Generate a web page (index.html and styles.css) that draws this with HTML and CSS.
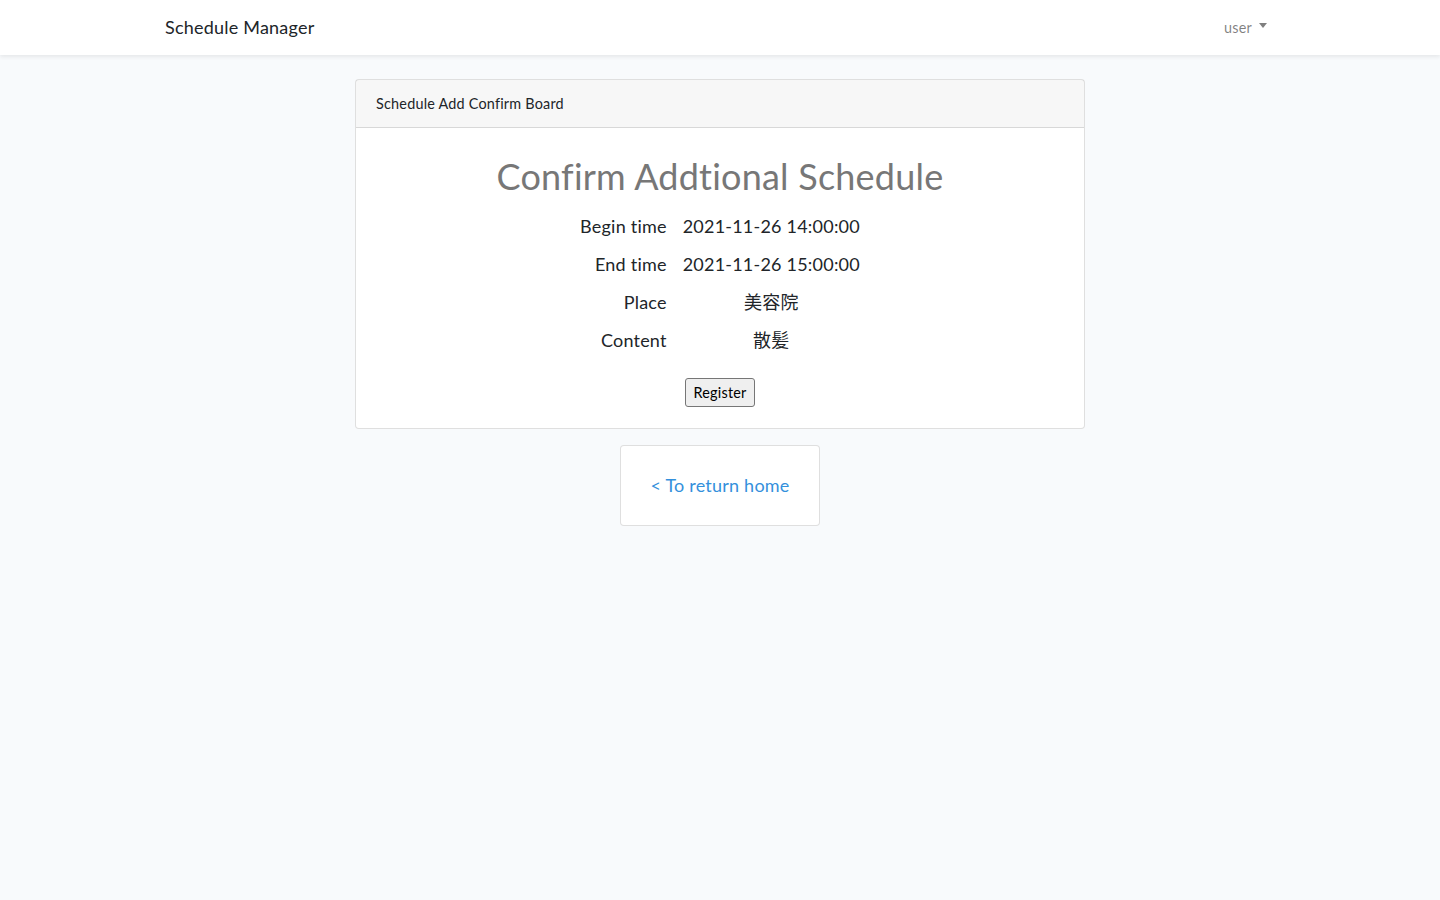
FILE: index.html
```html
<!DOCTYPE html>
<html lang="ja">
<head>
<meta charset="utf-8">
<title>Schedule Manager</title>
<link rel="stylesheet" href="styles.css">
</head>
<body>
<nav class="navbar">
  <div class="container nav-inner">
    <a class="brand" href="#">Schedule Manager</a>
    <a class="nav-user" href="#">user <span class="caret"></span></a>
  </div>
</nav>
<main class="main">
  <div class="container center-col">
    <div class="card confirm-card">
      <div class="card-header">Schedule Add Confirm Board</div>
      <div class="card-body">
        <h1 class="title">Confirm Addtional Schedule</h1>
        <table class="detail">
          <tr><th>Begin time</th><td>2021-11-26 14:00:00</td></tr>
          <tr><th>End time</th><td>2021-11-26 15:00:00</td></tr>
          <tr><th>Place</th><td>美容院</td></tr>
          <tr><th>Content</th><td>散髪</td></tr>
        </table>
        <div class="actions"><button class="btn-register" type="button">Register</button></div>
      </div>
    </div>
    <div class="card home-card">
      <a class="home-link" href="#">&lt; To return home</a>
    </div>
  </div>
</main>
</body>
</html>
```
FILE: styles.css
```css
* { box-sizing: border-box; }
html, body { margin: 0; }
body {
  background: #f8fafc;
  font-family: "Lato", "Noto Sans CJK JP", sans-serif;
  font-size: 14.4px;
  line-height: 1.6;
  letter-spacing: 0.015em;
  color: #212529;
  min-height: 900px;
}
a { text-decoration: none; }
.container {
  width: 1140px;
  margin: 0 auto;
  padding: 0 15px;
}
.navbar {
  background: #fff;
  box-shadow: 0 2px 4px rgba(0,0,0,.075);
  padding: 8px 0;
}
.nav-inner {
  display: flex;
  justify-content: space-between;
  align-items: center;
  height: 39px;
}
.brand {
  color: #212529;
  font-size: 18px;
}
.nav-user {
  color: rgba(0,0,0,.5);
  font-size: 14.4px;
  padding: 0 8px;
  display: flex;
  align-items: center;
}
.caret {
  display: inline-block;
  margin-left: 7px;
  border-top: 5px solid rgba(0,0,0,.5);
  border-left: 4.5px solid transparent;
  border-right: 4.5px solid transparent;
  position: relative;
  top: -2px;
}
.main { padding-top: 24px; }
.center-col {
  display: flex;
  flex-direction: column;
  align-items: center;
}
.card {
  background: #fff;
  border: 1px solid rgba(0,0,0,.125);
  border-radius: 4px;
}
.confirm-card { width: 730px; }
.card-header {
  background: rgba(0,0,0,.03);
  border-bottom: 1px solid rgba(0,0,0,.125);
  padding: 12px 20px;
  font-size: 14.4px;
  line-height: 23px;
}
.card-body {
  padding: 20px 20px 21px;
  text-align: center;
}
.title {
  margin: 7px 0 9px;
  font-size: 36px;
  font-weight: 400;
  line-height: 43px;
  color: #777;
}
.detail {
  margin: 0 auto;
  border-collapse: collapse;
  font-size: 18px;
}
.detail th, .detail td {
  padding: 5px 8px;
  line-height: 28px;
  font-weight: 400;
}
.detail th { text-align: right; }
.detail td { text-align: center; }
.actions { margin-top: 19px; }
.btn-register {
  font-family: inherit;
  font-size: 14.4px;
  letter-spacing: 0.015em;
  color: #000;
  background: #efefef;
  border: 1px solid #767676;
  border-radius: 3px;
  padding: 2px 7px;
  line-height: 23px;
}
.home-card {
  margin-top: 16px;
  width: 200px;
  height: 81px;
  display: flex;
  align-items: center;
  justify-content: center;
}
.home-link {
  color: #3490dc;
  font-size: 18px;
}
```
